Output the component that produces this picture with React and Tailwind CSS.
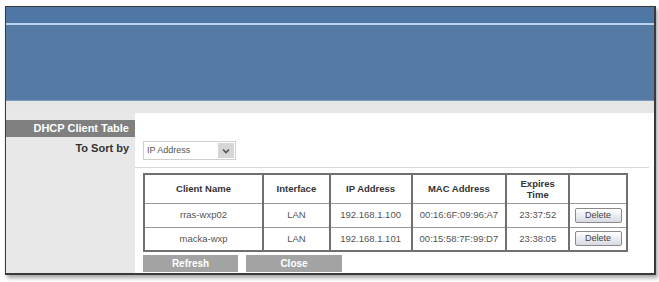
import React from "react";

const rows = [
  { name: "rras-wxp02", iface: "LAN", ip: "192.168.1.100", mac: "00:16:6F:09:96:A7", exp: "23:37:52" },
  { name: "macka-wxp", iface: "LAN", ip: "192.168.1.101", mac: "00:15:58:7F:99:D7", exp: "23:38:05" },
];

export default function App() {
  return (
    <div className="w-[659px] h-[282px] bg-white overflow-hidden" style={{ fontFamily: '"Liberation Sans", Arial, sans-serif' }}>
      <div className="ml-[5px] mt-[6px] w-[651px] h-[269px] border border-[#3a3a3a] border-b-2 border-r-2 shadow-[2px_3px_4px_rgba(0,0,0,0.35)] flex flex-col bg-[#e8e8e8]">
        {/* header */}
        <div className="h-[16px] bg-[#4f77a5]" />
        <div className="h-[2px] bg-[#b9d3ee]" />
        <div className="h-[76px] bg-[#557aa3] border-b border-[#7f9cc0]" />
        <div className="h-[12px] bg-[#e6e6e6]" />
        {/* body */}
        <div className="flex flex-1">
          <div className="w-[129px] bg-[#e8e8e8] pt-[7px] flex flex-col">
            <div className="h-[17px] bg-[#808080] text-white font-bold text-[11px] leading-[17px] text-right pr-[6px]">
              DHCP Client Table
            </div>
            <div className="mt-[5px] text-[#333] font-bold text-[11px] leading-[12px] text-right pr-[6px]">
              To Sort by
            </div>
          </div>
          <div className="flex-1 bg-white flex flex-col">
            <div className="pl-[8px] pt-[28px]">
              <div className="w-[93px] h-[19px] border border-[#cfcfcf] flex items-center bg-white">
                <span className="flex-1 pl-[3px] text-[9px] text-[#555]">IP Address</span>
                <span className="w-[16px] h-[15px] mr-[1px] bg-[#d6d6d6] flex items-center justify-center">
                  <svg width="8" height="6" viewBox="0 0 8 6"><path d="M1 1.5 L4 4.5 L7 1.5" stroke="#555" strokeWidth="1.6" fill="none" /></svg>
                </span>
              </div>
            </div>
            <div className="mt-[7px] h-px bg-[#d8d8d8] mr-[5px]" />
            <div className="pl-[8px] pt-[5px]">
              <table className="border-collapse border-2 border-[#707070] text-[9.5px] text-[#555]" style={{ width: 485 }}>
                <thead>
                  <tr className="h-[29px] font-bold text-[#333]">
                    <th className="w-[120px] border-2 border-[#707070] border-b border-b-[#999]">Client Name</th>
                    <th className="w-[67px] border-2 border-[#707070] border-b border-b-[#999]">Interface</th>
                    <th className="w-[82px] border-2 border-[#707070] border-b border-b-[#999]">IP Address</th>
                    <th className="w-[95px] border-2 border-[#707070] border-b border-b-[#999]">MAC Address</th>
                    <th className="w-[63px] border-2 border-[#707070] border-b border-b-[#999] leading-[11px]">Expires<br />Time</th>
                    <th className="w-[58px] border-2 border-[#707070] border-b border-b-[#999]"></th>
                  </tr>
                </thead>
                <tbody>
                  {rows.map((r, i) => (
                    <tr key={i} className="h-[24px] text-center">
                      <td className="border-x-2 border-x-[#707070] border-y border-y-[#999]">{r.name}</td>
                      <td className="border-x-2 border-x-[#707070] border-y border-y-[#999]">{r.iface}</td>
                      <td className="border-x-2 border-x-[#707070] border-y border-y-[#999]">{r.ip}</td>
                      <td className="border-x-2 border-x-[#707070] border-y border-y-[#999]">{r.mac}</td>
                      <td className="border-x-2 border-x-[#707070] border-y border-y-[#999]">{r.exp}</td>
                      <td className="border-x-2 border-x-[#707070] border-y border-y-[#999]">
                        <button className="w-[47px] h-[15px] border border-[#8a8a8a] rounded-[2px] bg-gradient-to-b from-white to-[#d9d9e4] text-[9px] text-[#444] leading-[13px]">
                          Delete
                        </button>
                      </td>
                    </tr>
                  ))}
                </tbody>
              </table>
              <div className="flex gap-[8px] mt-[3px]">
                <div className="w-[95px] h-[17px] bg-[#a3a3a3] text-white font-bold text-[10px] leading-[17px] text-center">Refresh</div>
                <div className="w-[96px] h-[17px] bg-[#a3a3a3] text-white font-bold text-[10px] leading-[17px] text-center">Close</div>
              </div>
            </div>
          </div>
        </div>
      </div>
    </div>
  );
}
